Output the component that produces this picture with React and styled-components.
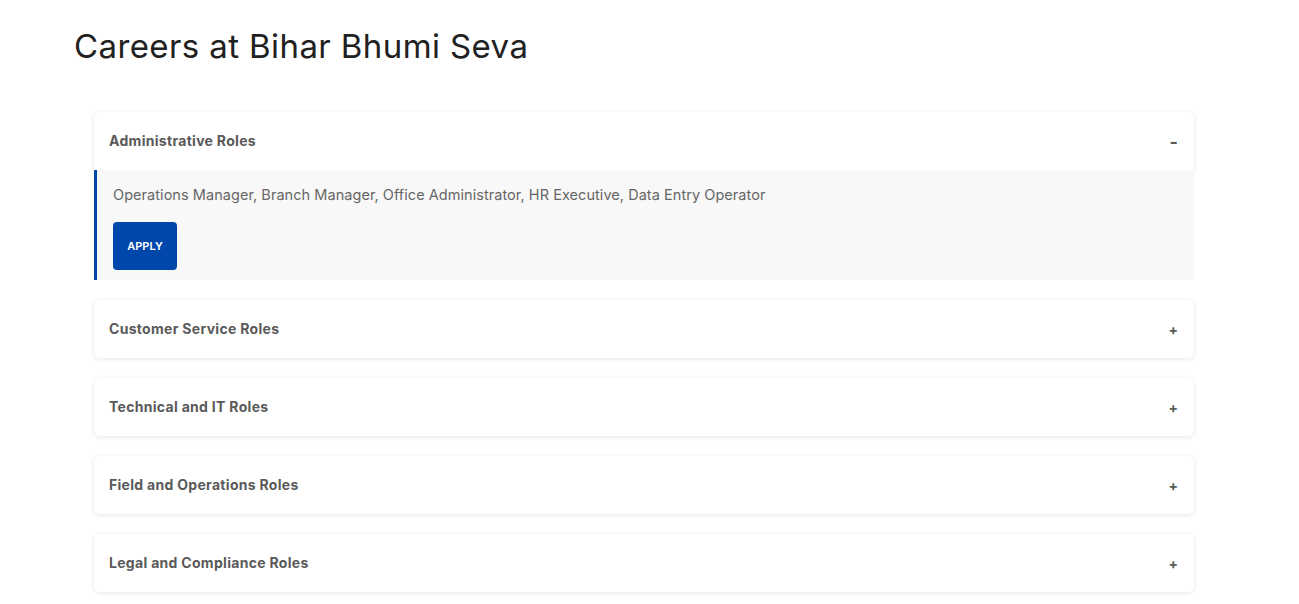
import React, { useState } from 'react';
import styled, { createGlobalStyle } from 'styled-components';

const roles = [
  {
    title: 'Administrative Roles',
    list: 'Operations Manager, Branch Manager, Office Administrator, HR Executive, Data Entry Operator',
  },
  {
    title: 'Customer Service Roles',
    list: 'Customer Support Executive, Call Center Agent, Client Relationship Manager',
  },
  {
    title: 'Technical and IT Roles',
    list: 'Software Developer, GIS Specialist, IT Support Engineer, Database Administrator',
  },
  {
    title: 'Field and Operations Roles',
    list: 'Field Surveyor, Land Record Officer, Field Executive',
  },
  {
    title: 'Legal and Compliance Roles',
    list: 'Legal Advisor, Compliance Officer, Documentation Executive',
  },
];

export default function App() {
  const [open, setOpen] = useState(0);

  return (
    <>
      <GlobalStyle />
      <Page>
        <Title>Careers at Bihar Bhumi Seva</Title>
        <Accordion>
          {roles.map((r, i) => (
            <Item key={r.title}>
              <Header $open={open === i} onClick={() => setOpen(open === i ? -1 : i)}>
                <HeaderText>{r.title}</HeaderText>
                <Toggle $open={open === i}>{open === i ? '-' : '+'}</Toggle>
              </Header>
              {open === i && (
                <Body>
                  <RoleList>{r.list}</RoleList>
                  <ApplyBtn>APPLY</ApplyBtn>
                </Body>
              )}
            </Item>
          ))}
        </Accordion>
      </Page>
    </>
  );
}

const GlobalStyle = createGlobalStyle`
  body {
    margin: 0;
    background: #fff;
    font-family: Inter, "Open Sans", sans-serif;
  }
`;

const Page = styled.div`
  width: 1140px;
  padding: 0 0 40px 74px;
  box-sizing: content-box;
`;

const Title = styled.h1`
  margin: 0;
  padding-top: 26px;
  font-size: 33px;
  line-height: 40px;
  font-weight: 400;
  color: #212121;
  letter-spacing: 0.4px;
`;

const Accordion = styled.div`
  margin: 46px 20px 0;
  display: flex;
  flex-direction: column;
  gap: 20px;
`;

const Item = styled.div`
  display: flex;
  flex-direction: column;
`;

const Header = styled.div`
  height: 58px;
  display: flex;
  align-items: center;
  justify-content: space-between;
  padding: 0 16px 0 15px;
  background: #fff;
  border-radius: ${({ $open }) => ($open ? '6px 6px 0 0' : '6px')};
  box-shadow: 0 1px 5px rgba(0, 0, 0, 0.1);
  cursor: pointer;
`;

const HeaderText = styled.span`
  font-size: 14px;
  font-weight: 700;
  color: #5a5a5a;
  letter-spacing: 0.3px;
  margin-top: -1px;
`;

const Toggle = styled.span`
  font-size: ${({ $open }) => ($open ? '18px' : '14px')};
  font-weight: 700;
  color: #5a5a5a;
`;

const Body = styled.div`
  background: #f8f8f8;
  border-left: 3px solid #0047ab;
  padding: 16px 16px 10px;
`;

const RoleList = styled.p`
  margin: 0 0 18px;
  font-size: 14.5px;
  line-height: 18px;
  color: #666;
  letter-spacing: 0.05px;
`;

const ApplyBtn = styled.button`
  display: block;
  width: 64px;
  height: 48px;
  border: none;
  border-radius: 4px;
  background: #0047ab;
  color: #fff;
  font-family: inherit;
  font-size: 11px;
  font-weight: 600;
  cursor: pointer;
`;
